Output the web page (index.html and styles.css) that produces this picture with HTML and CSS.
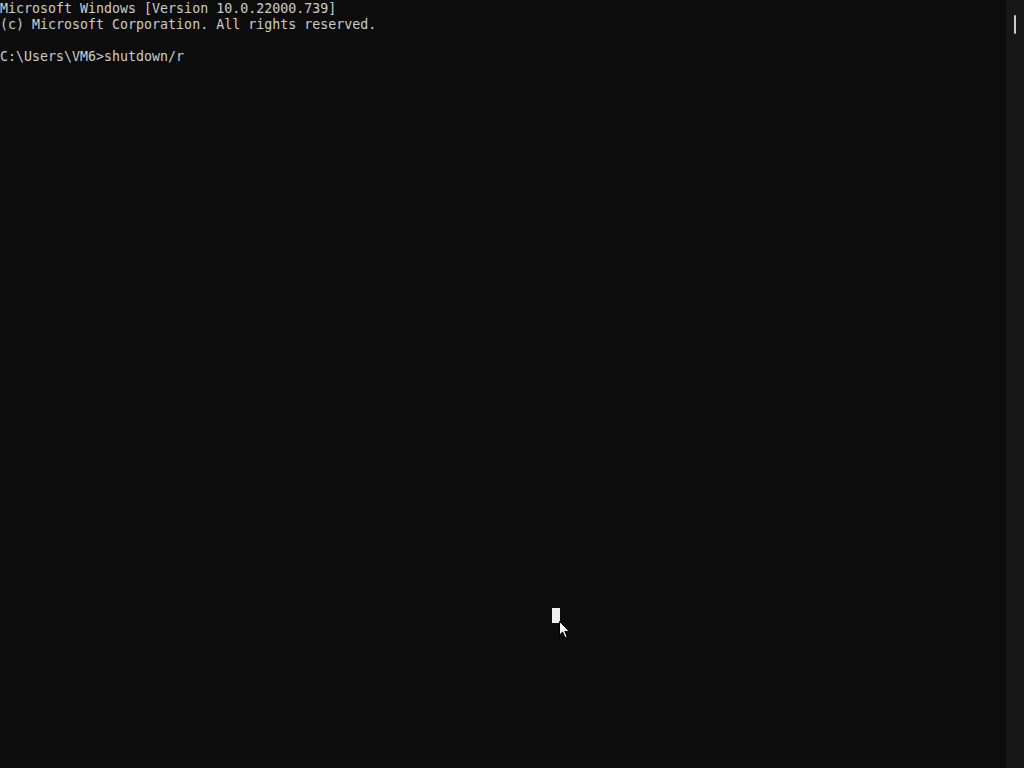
FILE: index.html
```html
<!DOCTYPE html>
<html lang="en">
<head>
    <meta charset="UTF-8">
    <title>Command Prompt</title>
    <link rel="stylesheet" href="styles.css">
</head>
<body>
    <div class="console">
        <pre class="output">Microsoft Windows [Version 10.0.22000.739]
(c) Microsoft Corporation. All rights reserved.

C:\Users\VM6&gt;shutdown/r</pre>
        <div class="caret"></div>
        <svg class="pointer" width="12" height="19" viewBox="0 0 12 19">
            <path d="M0.5 0.5 L0.5 14 L3.6 11 L6 16.6 L8.1 15.7 L5.8 10.4 L10.3 10.4 Z" fill="#ffffff" stroke="#000000" stroke-width="1"/>
        </svg>
    </div>
    <div class="scrollbar">
        <div class="thumb"></div>
    </div>
</body>
</html>
```

FILE: styles.css
```css
* {
    margin: 0;
    padding: 0;
    box-sizing: border-box;
}

html, body {
    width: 1024px;
    height: 768px;
    overflow: hidden;
}

body {
    display: flex;
    background-color: #0c0c0c;
}

.console {
    flex: 1;
    position: relative;
    background-color: #0c0c0c;
}

.output {
    padding-top: 1px;
    font-family: "DejaVu Sans Mono", "Liberation Mono", monospace;
    font-size: 13.3px;
    line-height: 16px;
    color: #cccccc;
    white-space: pre;
}

.caret {
    position: absolute;
    left: 552px;
    top: 608px;
    width: 8px;
    height: 15px;
    background-color: #f0f0f0;
}

.pointer {
    position: absolute;
    left: 559px;
    top: 621px;
}

.scrollbar {
    width: 18px;
    height: 100%;
    background-color: #171717;
    position: relative;
}

.thumb {
    position: absolute;
    left: 8px;
    top: 15px;
    width: 2px;
    height: 19px;
    background-color: #c8c8c8;
    border-radius: 1px;
}
```
